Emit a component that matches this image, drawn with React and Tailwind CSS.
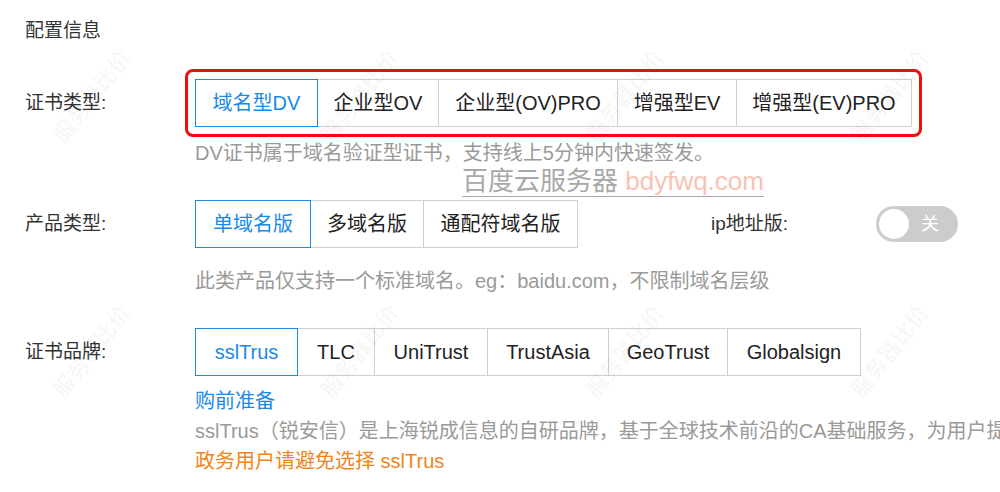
import React from 'react';

const font = { fontFamily: '"Liberation Sans", "Noto Sans CJK SC", sans-serif' };

const certTypes = [
  { name: '域名型DV', w: 'w-[123px]', active: true },
  { name: '企业型OV', w: 'w-[122px]' },
  { name: '企业型(OV)PRO', w: 'w-[180px]' },
  { name: '增强型EV', w: 'w-[120px]' },
  { name: '增强型(EV)PRO', w: 'w-[176px]' },
];

const productTypes = [
  { name: '单域名版', w: 'w-[116px]', active: true },
  { name: '多域名版', w: 'w-[114px]' },
  { name: '通配符域名版', w: 'w-[155px]' },
];

const brands = [
  { name: 'sslTrus', w: 'w-[103px]', active: true },
  { name: 'TLC', w: 'w-[78px]' },
  { name: 'UniTrust', w: 'w-[114px]' },
  { name: 'TrustAsia', w: 'w-[122px]' },
  { name: 'GeoTrust', w: 'w-[120px]' },
  { name: 'Globalsign', w: 'w-[134px]' },
];

function ButtonGroup({ items }) {
  return (
    <div className="flex">
      {items.map((it, i) => (
        <div
          key={it.name}
          className={`${it.w} h-[48px] flex items-center justify-center border text-[20px] ${i > 0 ? '-ml-px' : ''} ${
            it.active ? 'border-[#1a89e8] text-[#1a89e8] relative z-10' : 'border-[#cfcfcf] text-[#222]'
          }`}
        >
          {it.name}
        </div>
      ))}
    </div>
  );
}

function Label({ children }) {
  return <div className="w-[170px] h-[48px] shrink-0 flex items-center text-[19px] text-[#333]">{children}</div>;
}

const marks = [
  [92, 95], [360, 95], [625, 95], [890, 95],
  [92, 350], [360, 350], [625, 350], [890, 350],
];

export default function App() {
  return (
    <div className="relative w-[1000px] h-[492px] overflow-hidden bg-white pl-[25px] pt-[18px]" style={font}>
      {/* faint diagonal watermarks */}
      {marks.map(([x, y], i) => (
        <div
          key={i}
          className="absolute text-[22px] font-bold text-black/[0.04] whitespace-nowrap -rotate-[52deg] pointer-events-none"
          style={{ left: x - 55, top: y - 15 }}
        >
          服务器比价
        </div>
      ))}

      <div className="text-[19px] leading-[26px] text-[#333]">配置信息</div>

      {/* 证书类型 */}
      <div className="flex mt-[35px]">
        <Label>证书类型:</Label>
        <div>
          <div className="-m-[10px] border-[3px] border-[#f20d0d] rounded-[8px] p-[7px] w-fit">
            <ButtonGroup items={certTypes} />
          </div>
          <div className="mt-[13px] text-[20px] leading-[26px] text-[#9a9a9a] whitespace-nowrap">
            DV证书属于域名验证型证书，支持线上5分钟内快速签发。
          </div>
        </div>
      </div>

      {/* watermark */}
      <div className="absolute left-[462px] top-[166px] text-[26px] leading-[30px] whitespace-nowrap border-b border-[#aaa] pointer-events-none">
        <span className="text-[#a8a8a8]">百度云服务器 </span>
        <span className="text-[#f9c3b3]">bdyfwq.com</span>
      </div>

      {/* 产品类型 */}
      <div className="flex mt-[34px]">
        <Label>产品类型:</Label>
        <div>
          <div className="flex items-center">
            <ButtonGroup items={productTypes} />
            <div className="ml-[133px] w-[165px] text-[19px] text-[#333]">ip地址版:</div>
            <div className="w-[82px] h-[36px] rounded-full bg-[#cccccc] flex items-center px-[3px]">
              <div className="w-[30px] h-[30px] rounded-full bg-white"></div>
              <div className="flex-1 text-center text-white text-[18px] pr-[4px]">关</div>
            </div>
          </div>
          <div className="mt-[20px] text-[20px] leading-[26px] text-[#9a9a9a] whitespace-nowrap">
            此类产品仅支持一个标准域名。eg：baidu.com，不限制域名层级
          </div>
        </div>
      </div>

      {/* 证书品牌 */}
      <div className="flex mt-[34px]">
        <Label>证书品牌:</Label>
        <div>
          <ButtonGroup items={brands} />
          <div className="mt-[10px] text-[20px] leading-[30px] text-[#1a89e8]">购前准备</div>
          <div className="text-[20px] leading-[30px] text-[#9a9a9a] whitespace-nowrap">
            sslTrus（锐安信）是上海锐成信息的自研品牌，基于全球技术前沿的CA基础服务，为用户提
          </div>
          <div className="text-[20px] leading-[30px] text-[#f0851a] whitespace-nowrap">政务用户请避免选择 sslTrus</div>
        </div>
      </div>
    </div>
  );
}
